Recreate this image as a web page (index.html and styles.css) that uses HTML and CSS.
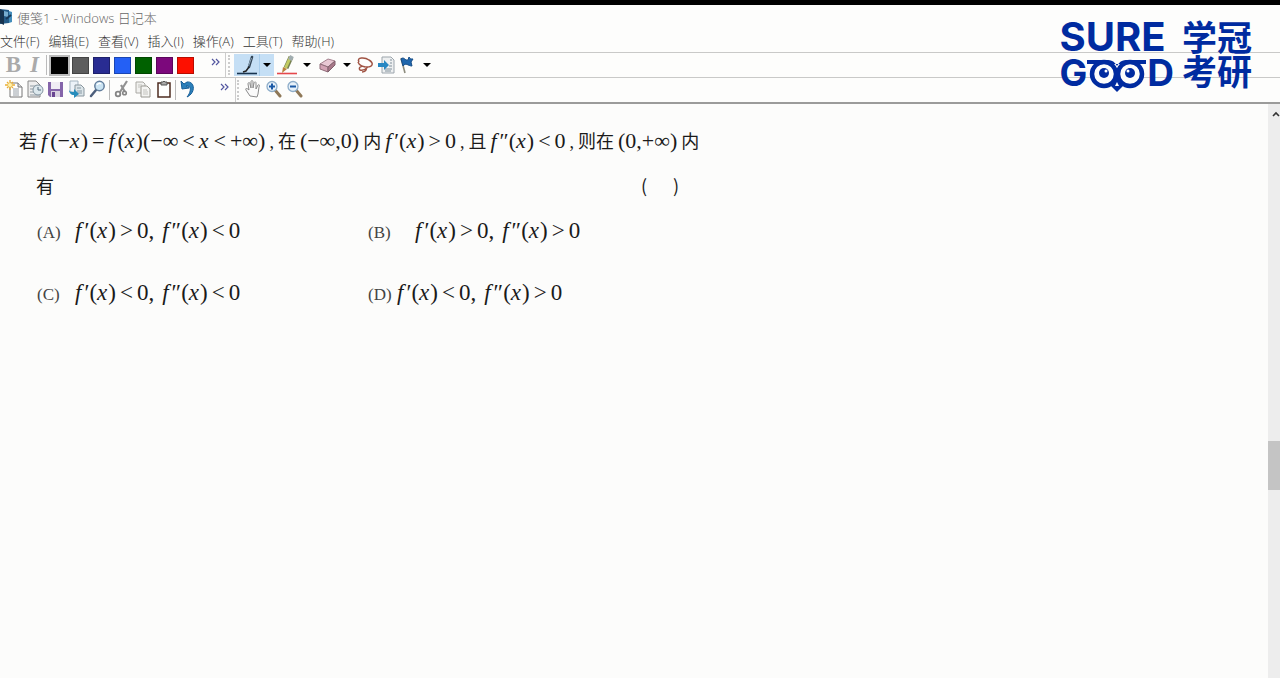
FILE: index.html
```html
<!DOCTYPE html>
<html lang="zh-CN">
<head>
<meta charset="utf-8">
<title>便笺1 - Windows 日记本</title>
<link rel="stylesheet" href="styles.css">
</head>
<body>
<header class="chrome">
  <div class="titlebar">
    <svg class="appicon" width="13" height="18" viewBox="0 0 13 18"><path d="M0 1l9 1v13l-9 1z" fill="#235a87"/><path d="M0 1l4 2v14l-4-2z" fill="#17334f"/><path d="M9 3l3 1v10l-3 1z" fill="#438dbb"/><path d="M4 3l4 1v5L4 8z" fill="#77add0"/><path d="M6 11l5-4" stroke="#183858" stroke-width="2"/></svg>
    <h1 class="title">便笺1 - Windows 日记本</h1>
  </div>
  <nav class="menu">
    <button>文件(F)</button><button>编辑(E)</button><button>查看(V)</button><button>插入(I)</button><button>操作(A)</button><button>工具(T)</button><button>帮助(H)</button>
  </nav>
  <div class="toolbar">
    <div class="group format">
      <button class="tool bold" aria-label="加粗">B</button>
      <button class="tool ital" aria-label="倾斜">I</button>
      <span class="sep wide"></span>
      <button class="tool swatch black chosen" aria-label="黑色"></button>
      <button class="tool swatch gray" aria-label="灰色"></button>
      <button class="tool swatch navy" aria-label="深蓝"></button>
      <button class="tool swatch blue" aria-label="蓝色"></button>
      <button class="tool swatch green" aria-label="绿色"></button>
      <button class="tool swatch purple" aria-label="紫色"></button>
      <button class="tool swatch red" aria-label="红色"></button>
      <button class="more" aria-label="更多"><svg width="9" height="8" viewBox="0 0 9 8"><path d="M1 1l3 3-3 3M5 1l3 3-3 3" fill="none" stroke="#5356a0" stroke-width="1.2"/></svg></button>
    </div>
    <div class="group pens">
      <button class="pen on" aria-label="笔"><svg width="24" height="20" viewBox="0 0 24 20"><path d="M2 18.5h20" stroke="#17334f" stroke-width="1.6"/><path d="M17 2l-3 10" stroke="#344657" stroke-width="2.6" stroke-linecap="round"/><path d="M16.500 3l-3 8" stroke="#8da5b8"/><path d="M14 12l-3 4-3 1" stroke="#222" stroke-width="1.5" fill="none"/></svg></button>
      <button class="drop on" aria-label="笔选项"><svg width="8" height="5"><path d="M0 0h8L4 4z"/></svg></button>
      <button class="pen" aria-label="荧光笔"><svg width="22" height="20" viewBox="0 0 22 20"><path d="M1 18.5h20" stroke="#e5484c" stroke-width="1.6"/><path d="M15 2l-5 11" stroke="#768052" stroke-width="5"/><path d="M14.500 2l-5 11" stroke="#c2cb62" stroke-width="3"/><path d="M16 1l-2 4" stroke="#a1adb0" stroke-width="4"/><path d="M7 12l4 2-5 4z" fill="#ba813e"/></svg></button>
      <button class="drop" aria-label="荧光笔选项"><svg width="8" height="5"><path d="M0 0h8L4 4z"/></svg></button>
      <button class="pen" aria-label="橡皮擦"><svg width="20" height="18" viewBox="0 0 20 18"><path d="M3 8l8-5 7 2-7 6z" fill="#e9c8d4" stroke="#a5818e"/><path d="M3 8l8 3v5l-8-3z" fill="#d3a2b4" stroke="#8f6c79"/><path d="M11 11l7-6v4l-7 7z" fill="#a87889" stroke="#80616d"/></svg></button>
      <button class="drop" aria-label="橡皮擦选项"><svg width="8" height="5"><path d="M0 0h8L4 4z"/></svg></button>
      <button class="tool" aria-label="选择工具"><svg width="18" height="18" viewBox="0 0 18 18"><path d="M3 6C0 1 9 1 13 4c5 3 4 7-2 7C7 11 3 9 2 6M9 11c-4-2-7 1-5 3 3 1 6-1 8-3M10 12c1 2-1 4-4 4" fill="none" stroke="#a05343" stroke-width="1.500"/></svg></button>
      <button class="tool" aria-label="插入页面"><svg width="18" height="18" viewBox="0 0 18 18"><path d="M5 1h9l3 3v13H5z" fill="#eef0f1" stroke="#9ca5ac"/><path d="M13 4h2M13 7h2M12 10h3M8 13h7M8 15h6" stroke="#80909b"/><path d="M1 7h6V4l5 5-5 5v-3H1z" fill="#2787c2"/></svg></button>
      <button class="tool" aria-label="标志"><svg width="18" height="18" viewBox="0 0 18 18"><path d="M3 2l4 15" stroke="#8c8b7d" stroke-width="1.6"/><path d="M3 3c3-3 4 2 7 1l1-3c1 2 2 2 4 2l-2 3 1 4C10 10 8 6 5 10z" fill="#1f66ad" stroke="#174d87"/></svg></button>
      <button class="drop last" aria-label="标志选项"><svg width="8" height="5"><path d="M0 0h8L4 4z"/></svg></button>
    </div>
  </div>
  <div class="toolbar">
    <div class="group files">
      <button class="tool" aria-label="新建"><svg width="18" height="18" viewBox="0 0 18 18"><path d="M5 3h8l4 4v10H5z" fill="#fff" stroke="#777"/><path d="M13 3v4h4" fill="#ddd" stroke="#777"/><path d="M8 9h6M8 11h6M8 13h6M8 15h6" stroke="#98a0a8"/><path d="M5 0v10M0 5h10M2 2l6 6M8 2L2 8" stroke="#e9af35" stroke-width="1.3"/><circle cx="5" cy="5" r="2" fill="#fff2aa"/></svg></button>
      <button class="tool" aria-label="最近"><svg width="18" height="18" viewBox="0 0 18 18"><path d="M2 1h8l4 4v12H2z" fill="#eee" stroke="#888"/><path d="M4 6h7M4 9h5M4 12h4M4 15h9" stroke="#919ca3"/><circle cx="12" cy="10" r="5" fill="#dce8ed" stroke="#82939f"/><path d="M12 7v3h3" fill="none" stroke="#526b7c"/></svg></button>
      <button class="tool" aria-label="保存"><svg width="18" height="18" viewBox="0 0 18 18"><path d="M1 2h15v15H3l-2-2z" fill="#8565aa"/><path d="M4 2h9v7H4z" fill="#f0edf4"/><path d="M4 11h9v6H4z" fill="#d9d1e0"/><path d="M5 12h3v5H5z" fill="#694591"/></svg></button>
      <button class="tool" aria-label="导入"><svg width="18" height="18" viewBox="0 0 18 18"><path d="M2 1h8v11H2z" fill="#ecf2f8" stroke="#a5b5c1"/><path d="M7 5h6l3 3v8H7z" fill="#dce5e9" stroke="#89969e"/><path d="M9 8h4M9 11h5M9 13h5" stroke="#8698a3"/><path d="M1 9c0 3 3 3 5 3v-3l5 5-5 4v-3c-3 0-5-2-5-6z" fill="#278dbc"/></svg></button>
      <button class="tool" aria-label="查找"><svg width="18" height="18" viewBox="0 0 18 18"><path d="M7 10l-5 6" stroke="#4d5f7c" stroke-width="2.500" stroke-linecap="round"/><circle cx="10.500" cy="6" r="4.700" fill="#cbe4f3" stroke="#637e9c" stroke-width="1.500"/><path d="M8 5c1-2 3-2 4-1" fill="none" stroke="#fff" stroke-width="1.500"/></svg></button>
      <span class="sep"></span>
      <button class="tool" aria-label="剪切"><svg width="18" height="18" viewBox="0 0 18 18"><path d="M14 1L7 12M8 5l4 7" stroke="#929292" stroke-width="2.200"/><circle cx="5" cy="14" r="2.300" fill="none" stroke="#858585" stroke-width="1.800"/><circle cx="11.500" cy="13" r="1.800" fill="none" stroke="#858585" stroke-width="1.600"/></svg></button>
      <button class="tool" aria-label="复制"><svg width="18" height="18" viewBox="0 0 18 18"><path d="M2 2h7l2 2v9H2z" fill="#f1f1ef" stroke="#aaa9a4"/><path d="M7 6h6l3 3v8H7z" fill="#f5f5f3" stroke="#999891"/><path d="M4 5h4M4 7h3M9 10h4M9 12h5M9 14h5" stroke="#c3c3be"/></svg></button>
      <button class="tool" aria-label="粘贴"><svg width="18" height="18" viewBox="0 0 18 18"><path d="M3 3h12v14H3z" fill="#fff" stroke="#4d2c20" stroke-width="1.500"/><path d="M6 2h2l1-1 1 1h2v3H6z" fill="#aaa" stroke="#555"/></svg></button>
      <span class="sep"></span>
      <button class="tool" aria-label="撤消"><svg width="18" height="18" viewBox="0 0 18 18"><path d="M2 1l1 8 7-1-3-2c5-1 6 5 1 11C17 13 16 1 8 2L5 4z" fill="#2a7fba" stroke="#175e98"/></svg></button>
      <button class="more" aria-label="更多"><svg width="9" height="8" viewBox="0 0 9 8"><path d="M1 1l3 3-3 3M5 1l3 3-3 3" fill="none" stroke="#5356a0" stroke-width="1.2"/></svg></button>
    </div>
    <div class="group view">
      <button class="tool" aria-label="平移"><svg width="18" height="18" viewBox="0 0 18 18"><path d="M6 16L2 10c-1-2 1-2 3 0L4 4c0-2 2-2 2 0l1 4V2c0-2 2-2 2 0v6l1-5c1-2 2-1 2 0v6l2-4c1-1 2 0 1 2l-1 7-1 3z" fill="#fafafa" stroke="#8b8b8b"/></svg></button>
      <button class="tool" aria-label="放大"><svg width="18" height="18" viewBox="0 0 18 18"><path d="M10 10l5 6" stroke="#8f7858" stroke-width="3" stroke-linecap="round"/><circle cx="7" cy="6.500" r="5" fill="#e8f2fa" stroke="#8eadc9" stroke-width="1.300"/><path d="M4 6.500h6M7 3.500v6" stroke="#1b59a5" stroke-width="2"/></svg></button>
      <button class="tool" aria-label="缩小"><svg width="18" height="18" viewBox="0 0 18 18"><path d="M10 10l5 6" stroke="#8f7858" stroke-width="3" stroke-linecap="round"/><circle cx="7" cy="6.500" r="5" fill="#e8f2fa" stroke="#8eadc9" stroke-width="1.300"/><path d="M4 6.500h6" stroke="#1b59a5" stroke-width="2"/></svg></button>
    </div>
  </div>
  <div class="brand">
    <div class="latin">
      <span class="sure">SURE</span>
      <div class="good"><span>G</span><svg width="60" height="34" viewBox="0 0 60 34"><path d="M0 1h21q6 0 9 6 3-6 9-6h20v4H0z" fill="#002ba0"/><circle cx="17" cy="15" r="12" fill="#fdfdfc" stroke="#002ba0" stroke-width="4.500"/><circle cx="43" cy="15" r="12" fill="#fdfdfc" stroke="#002ba0" stroke-width="4.500"/><circle cx="17" cy="14" r="5" fill="#002ba0"/><circle cx="43" cy="14" r="5" fill="#002ba0"/><circle cx="19" cy="12" r="1.500" fill="#fff"/><circle cx="41" cy="12" r="1.500" fill="#fff"/><path d="M30 18l7 8-7 7-7-7z" fill="#002ba0"/><path d="M30 23l2 4h-4z" fill="#fff"/></svg><span>D</span></div>
    </div>
    <div class="han"><span>学冠</span><span>考研</span></div>
  </div>
</header>
<main class="note">
  <article class="page">
    <p class="line stem"><span>若</span><span class="m"><i class="f">f</i>(−<i>x</i>)<b>=</b><i class="f">f</i>(<i>x</i>)(−∞<b>&lt;</b><i>x</i><b>&lt;</b>+∞)</span><span class="comma">,</span><span>在</span><span class="m">(−∞,0)</span><span>内</span><span class="m"><i class="f">f</i>′(<i>x</i>)<b>&gt;</b>0</span><span class="comma">,</span><span>且</span><span class="m"><i class="f">f</i>″(<i>x</i>)<b>&lt;</b>0</span><span class="comma">,</span><span>则在</span><span class="m">(0,+∞)</span><span>内</span></p>
    <p class="line second"><span>有</span><span class="blank"><span>(</span><span>)</span></span></p>
    <div class="options">
      <p class="line"><span class="key">(A)</span><span class="m"><i class="f">f</i>′(<i>x</i>)<b>&gt;</b>0<u>,</u><i class="f">f</i>″(<i>x</i>)<b>&lt;</b>0</span></p>
      <p class="line far"><span class="key">(B)</span><span class="m"><i class="f">f</i>′(<i>x</i>)<b>&gt;</b>0<u>,</u><i class="f">f</i>″(<i>x</i>)<b>&gt;</b>0</span></p>
      <p class="line"><span class="key">(C)</span><span class="m"><i class="f">f</i>′(<i>x</i>)<b>&lt;</b>0<u>,</u><i class="f">f</i>″(<i>x</i>)<b>&lt;</b>0</span></p>
      <p class="line near"><span class="key">(D)</span><span class="m"><i class="f">f</i>′(<i>x</i>)<b>&lt;</b>0<u>,</u><i class="f">f</i>″(<i>x</i>)<b>&gt;</b>0</span></p>
    </div>
  </article>
  <div class="scroll">
    <svg class="up" width="8" height="7" viewBox="0 0 8 7"><path d="M1 5l3-3 3 3" fill="none" stroke="#333" stroke-width="1.6"/></svg>
    <span class="track"></span><span class="thumb"></span><span class="rest"></span>
  </div>
</main>
</body>
</html>
```
FILE: styles.css
```css
* { box-sizing: border-box; }
body {
  margin: 0;
  min-height: 100vh;
  display: flex;
  flex-direction: column;
  background: #fcfcfb;
  border-top: 5px solid #000;
  font-family: "Noto Sans", "Noto Sans CJK SC", sans-serif;
}
button {
  border: 0;
  padding: 0;
  background: none;
  font: inherit;
  color: inherit;
  display: flex;
  align-items: center;
  justify-content: center;
}
.chrome { position: relative; border-bottom: 2px solid #9b9b9a; background: #fdfdfc; }
.titlebar { display: flex; align-items: center; gap: 4px; height: 24px; }
.title {
  margin: 0;
  font-family: "Open Sans", "Noto Sans CJK SC", sans-serif;
  font-size: 13px;
  font-weight: 300;
  color: #666;
}
.menu {
  display: flex;
  gap: 9px;
  height: 23px;
  padding-bottom: 1px;
  font-family: "Open Sans", "Noto Sans CJK SC", sans-serif;
  font-weight: 300;
  font-size: 13px;
  color: #333;
}
.toolbar { display: flex; height: 25px; border-top: 1px solid #c9c9c8; }
.group { display: flex; align-items: center; }
.tool { width: 21px; height: 22px; }
.bold, .ital { font: bold 23px "Liberation Serif", serif; color: #aaa; }
.ital { font-style: italic; }
.format, .files { padding-left: 3px; border-right: 1px solid #ccc; }
.format { width: 226px; }
.files { width: 236px; }
.files .tool, .view .tool { height: 24px; padding-bottom: 2px; }
.sep { width: 1px; height: 20px; margin: 0 1px; background: #bbb; }
.wide { margin: 0 2px 0 1px; }
.more { margin: 0 5px 6px auto; }
.files .more { margin-right: 6px; }
.swatch::before { content: ""; width: 15px; height: 15px; border: 1px solid #0004; background: currentColor; }
.chosen::before { outline: 2px solid #bbb; }
.black { color: #000; }
.gray { color: #5d5d5d; }
.navy { color: #292c92; }
.blue { color: #2460f5; }
.green { color: #006100; }
.purple { color: #7c087c; }
.red { color: #fd1000; }
.pens::before, .view::before {
  content: "";
  width: 2px;
  height: 20px;
  margin: 0 2px;
  border-left: 2px dotted #ccc;
}
.view::before { margin: 0 1px; }
.pen { width: 25px; height: 22px; }
.drop { width: 15px; height: 22px; }
.last { width: 20px; }
.on { background: #c5dff5; }
.drop.on { border-left: 1px solid #a8cdec; }
.brand {
  position: absolute;
  top: 14px;
  right: 28px;
  display: flex;
  gap: 8px;
  color: #002ba0;
}
.latin { font: 700 37px/36px Inter, sans-serif; }
.sure { display: block; font-size: 40px; }
.good { display: flex; height: 36px; }
.good svg { margin-top: 4px; }
.han { font: 700 35px/34px "Noto Sans CJK SC", sans-serif; }
.han span { display: block; }
.note { flex: 1; display: flex; }
.page { flex: 1; padding: 22px 19px; }
.line {
  margin: 0;
  display: flex;
  align-items: baseline;
  font-family: "Noto Sans CJK SC", sans-serif;
  font-size: 18px;
  line-height: 28px;
  color: #1a1a1a;
  white-space: nowrap;
}
.stem { gap: 4px; }
.comma { font-family: "Liberation Serif", serif; }
.m { font-family: "Liberation Serif", serif; font-size: 23px; }
.stem .m { font-size: 22px; }
.m i { padding-right: 1px; }
.m .f { padding-right: 3px; }
.m b { font-weight: normal; padding: 0 4px; }
.m u { text-decoration: none; padding-right: 8px; }
.second { padding: 15px 0 0 17px; }
.blank { display: flex; gap: 26px; margin-left: 587px; }
.options {
  display: grid;
  grid-template-columns: 331px max-content;
  row-gap: 32px;
  padding: 18px 0 0 18px;
}
.key { width: 38px; font-family: "Liberation Serif", serif; font-size: 17px; color: #444; }
.far .key { width: 47px; }
.near .key { width: 29px; }
.scroll {
  width: 12px;
  display: flex;
  flex-direction: column;
  background: #ededed;
}
.up { margin: 7px 0 0 4px; }
.track { flex: 324; }
.thumb { flex: 49; background: #c4c4c4; }
.rest { flex: 188; }
```
